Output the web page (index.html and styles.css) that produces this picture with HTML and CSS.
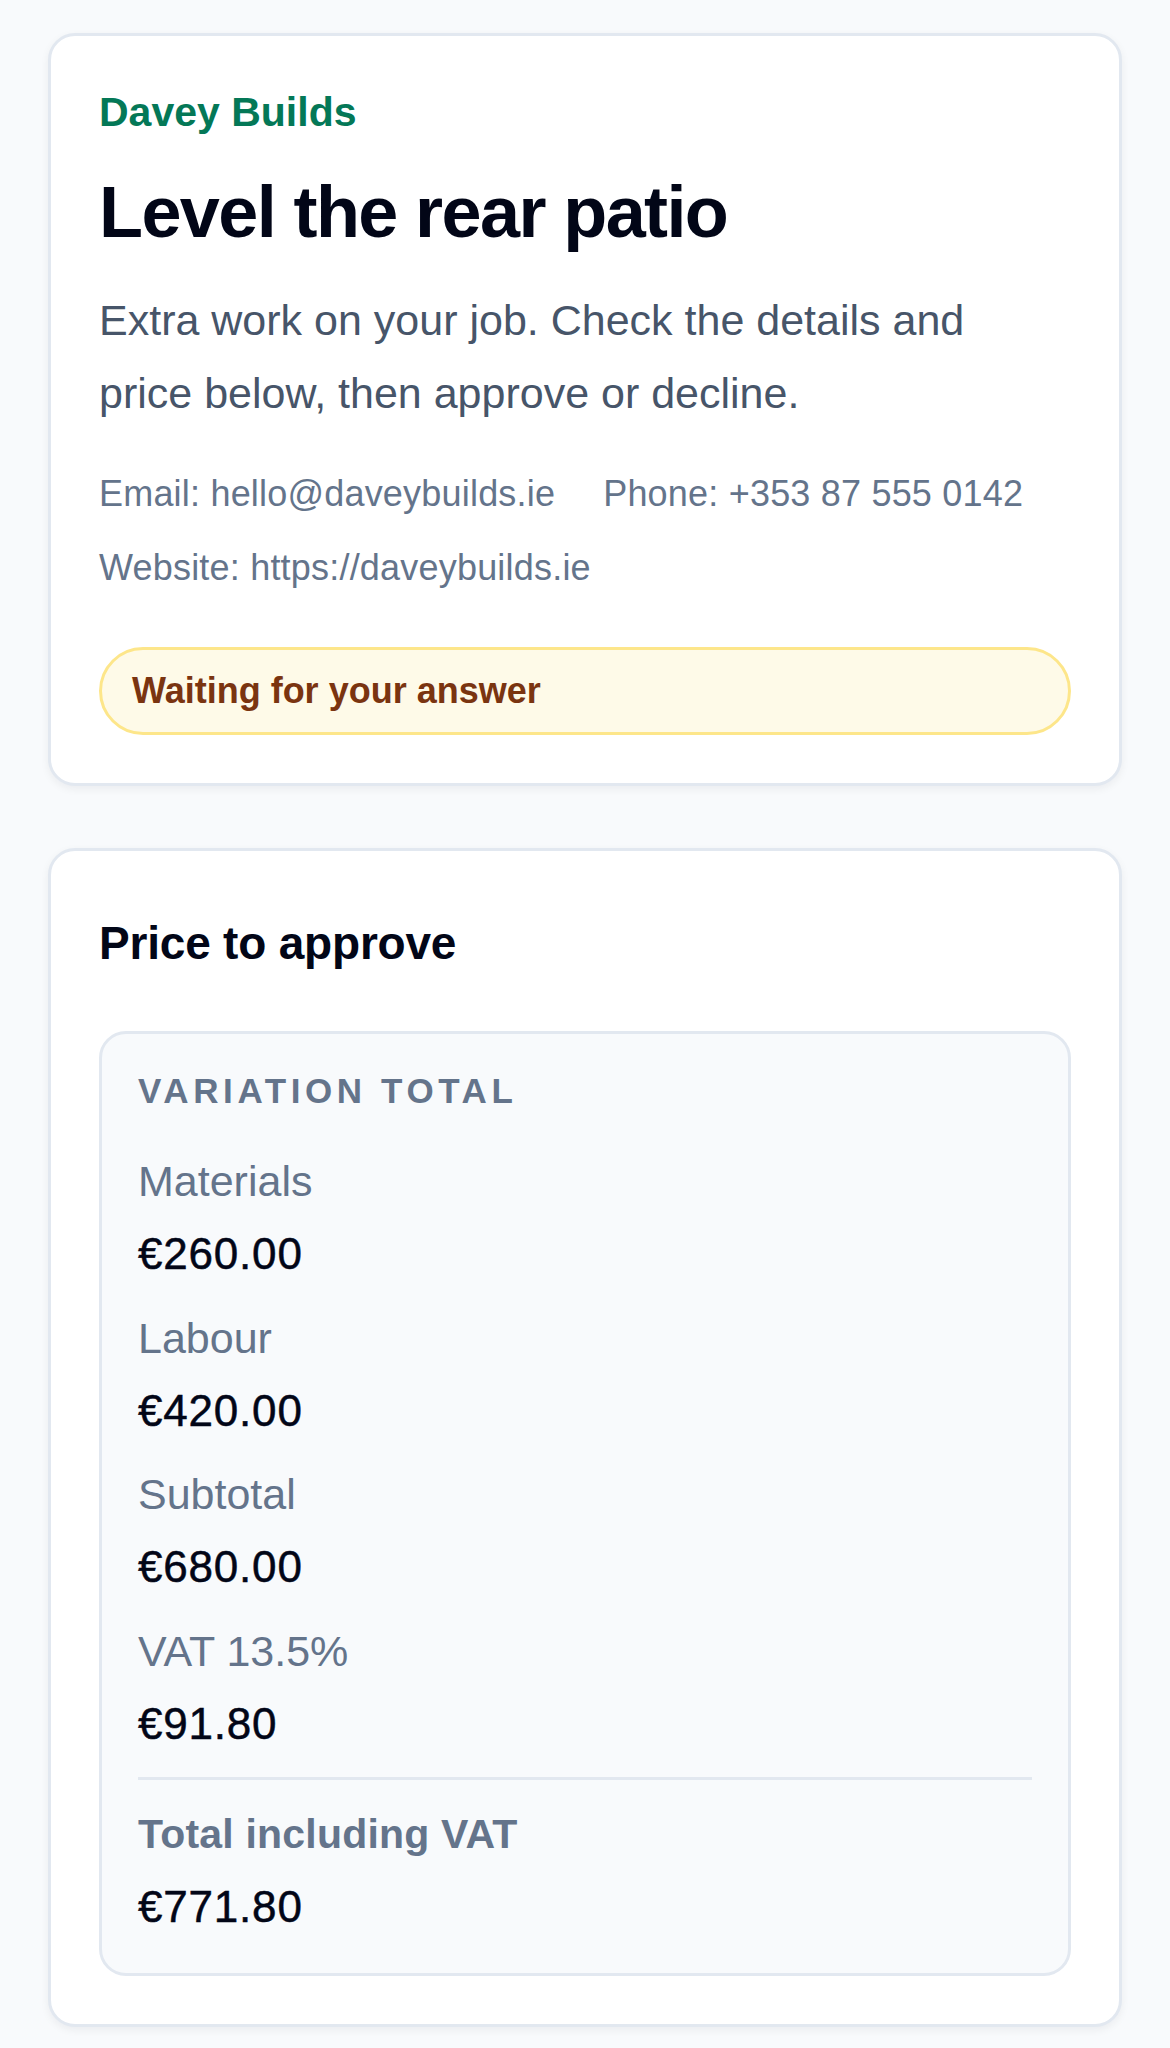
FILE: index.html
```html
<!DOCTYPE html>
<html lang="en">
<head>
<meta charset="utf-8">
<title>Level the rear patio – Davey Builds</title>
<link rel="stylesheet" href="styles.css">
</head>
<body>
<main class="page">
  <section class="card intro">
    <p class="brand">Davey Builds</p>
    <h1 class="title">Level the rear patio</h1>
    <p class="lead">Extra work on your job. Check the details and price below, then approve or decline.</p>
    <ul class="contact">
      <li>Email: hello@daveybuilds.ie</li>
      <li>Phone: +353 87 555 0142</li>
      <li>Website: https://daveybuilds.ie</li>
    </ul>
    <div class="status">Waiting for your answer</div>
  </section>

  <section class="card price">
    <h2 class="section-title">Price to approve</h2>
    <div class="totals">
      <p class="eyebrow">VARIATION TOTAL</p>
      <dl class="lines">
        <div class="line">
          <dt>Materials</dt>
          <dd>€260.00</dd>
        </div>
        <div class="line">
          <dt>Labour</dt>
          <dd>€420.00</dd>
        </div>
        <div class="line">
          <dt>Subtotal</dt>
          <dd>€680.00</dd>
        </div>
        <div class="line">
          <dt>VAT 13.5%</dt>
          <dd>€91.80</dd>
        </div>
        <div class="line total">
          <dt>Total including VAT</dt>
          <dd>€771.80</dd>
        </div>
      </dl>
    </div>
  </section>
</main>
</body>
</html>
```

FILE: styles.css
```css
* {
  box-sizing: border-box;
}

html, body {
  margin: 0;
  padding: 0;
  background: #f8fafc;
}

body {
  font-family: "Liberation Sans", Arial, sans-serif;
  color: #020617;
}

.page {
  display: flex;
  flex-direction: column;
  gap: 62px;
  padding: 33px 48px 40px;
}

.card {
  background: #ffffff;
  border: 3px solid #e2e8f0;
  border-radius: 27px;
  padding: 48px;
  box-shadow: 0 3px 9px rgba(15, 23, 42, 0.06);
}

.brand {
  margin: 0;
  font-size: 41px;
  line-height: 56px;
  font-weight: 700;
  color: #047857;
}

.title {
  margin: 28px 0 0;
  font-size: 72px;
  line-height: 88px;
  font-weight: 700;
  letter-spacing: -1.6px;
  color: #020617;
}

.lead {
  margin: 28px 0 0;
  max-width: 940px;
  font-size: 43px;
  line-height: 73px;
  color: #475569;
}

.contact {
  list-style: none;
  margin: 37px 0 0;
  padding: 0;
  display: flex;
  flex-wrap: wrap;
  column-gap: 48px;
  row-gap: 20px;
  font-size: 36px;
  line-height: 54px;
  letter-spacing: 0.2px;
  color: #64748b;
}

.status {
  margin-top: 52px;
  border: 3px solid #fde68a;
  background: #fefae8;
  border-radius: 999px;
  padding: 14px 30px;
  font-size: 36px;
  line-height: 54px;
  font-weight: 700;
  color: #7a3410;
}

.section-title {
  margin: 14px 0 0;
  font-size: 46px;
  line-height: 60px;
  font-weight: 700;
  letter-spacing: -0.2px;
  color: #020617;
}

.totals {
  margin-top: 58px;
  background: #f8fafc;
  border: 3px solid #e2e8f0;
  border-radius: 27px;
  padding: 36px;
}

.eyebrow {
  margin: 0;
  font-size: 35px;
  line-height: 42px;
  font-weight: 700;
  letter-spacing: 4.6px;
  color: #64748b;
}

.lines {
  margin: 39px 0 0;
  display: flex;
  flex-direction: column;
  gap: 23.5px;
}

.line {
  display: flex;
  flex-direction: column;
  gap: 13px;
}

.line dt {
  font-size: 43px;
  line-height: 60px;
  color: #64748b;
}

.line dd {
  margin: 0;
  font-size: 44px;
  line-height: 60px;
  letter-spacing: 0.8px;
  -webkit-text-stroke: 0.5px #020617;
  color: #020617;
}

.line.total {
  border-top: 3px solid #e2e8f0;
  padding-top: 24px;
}

.line.total dt {
  font-size: 41px;
  font-weight: 700;
  letter-spacing: 0.2px;
}
```
